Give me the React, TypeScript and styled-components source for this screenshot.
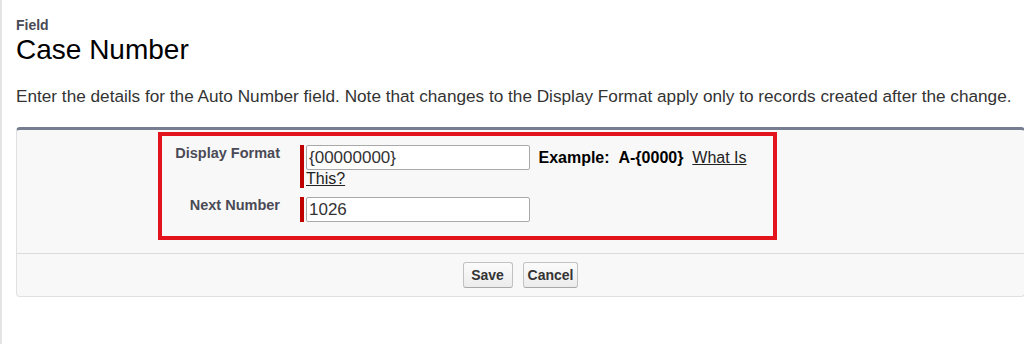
import React from "react";
import styled, { createGlobalStyle } from "styled-components";

const GlobalStyle = createGlobalStyle`
  html, body {
    margin: 0;
    padding: 0;
    background: #ffffff;
    overflow: hidden;
  }
  body {
    font-family: "Liberation Sans", Arial, sans-serif;
    color: #333333;
  }
`;

const Page = styled.div`
  min-height: 344px;
  box-sizing: border-box;
  border-left: 2px solid #e4e4e4;
  padding: 17px 0 0 14px;
`;

const Kicker = styled.div`
  font-size: 14px;
  font-weight: bold;
  line-height: 17px;
  color: #4a4a56;
`;

const Title = styled.h1`
  margin: 0;
  font-size: 28px;
  font-weight: normal;
  line-height: 32px;
  color: #000000;
`;

const Intro = styled.p`
  margin: 21px 0 0;
  font-size: 17.2px;
  line-height: 19px;
  color: #333333;
  white-space: nowrap;
`;

const Panel = styled.section`
  margin-top: 21px;
  margin-right: -1px;
  background: #f8f8f8;
  border: 1px solid #e0e0e0;
  border-top: 3px solid #767d90;
  border-radius: 4px;
`;

const FormSection = styled.div`
  padding: 2px 0 13px 141px;
  border-bottom: 1px solid #dcdcdc;
`;

const Highlight = styled.div`
  box-sizing: border-box;
  width: 619px;
  border: 4px solid #e3141b;
  padding: 9px 0 14px 0;
  display: grid;
  grid-template-columns: 122px 1fr;
  column-gap: 16px;
  row-gap: 9px;
`;

const Label = styled.label`
  padding-right: 4px;
  text-align: right;
  font-size: 14.5px;
  font-weight: bold;
  line-height: 17px;
  color: #4a4a56;
`;

const DataCell = styled.div`
  border-left: 4px solid #c00000;
  padding-left: 2px;
  font-size: 16px;
  line-height: 18px;
  color: #000000;
`;

const TextInput = styled.input`
  box-sizing: border-box;
  width: 224px;
  height: 25px;
  margin: 0 4px 0 0;
  padding: 0 2px;
  border: 1px solid #a9a9a9;
  border-radius: 2px;
  background: #ffffff;
  font-family: inherit;
  font-size: 17px;
  color: #333333;
  vertical-align: baseline;
  outline: none;
`;

const Example = styled.span`
  font-weight: bold;
  color: #000000;
`;

const HelpLink = styled.a`
  color: #222222;
  text-decoration: underline;
  cursor: pointer;
`;

const ButtonBar = styled.div`
  display: flex;
  justify-content: center;
  gap: 10px;
  padding: 8px 0;
`;

const Button = styled.button`
  box-sizing: border-box;
  height: 26px;
  min-width: 50px;
  padding: 0 4px;
  border: 1px solid #c2c2c2;
  border-bottom-color: #a8a8a8;
  border-radius: 3px;
  background: linear-gradient(#fbfbfb, #ececec);
  font-family: inherit;
  font-size: 14px;
  font-weight: bold;
  color: #333333;
  cursor: pointer;
`;

const exampleText = "Example:\u00a0\u00a0A-{0000}";

export default function App() {
  return (
    <>
      <GlobalStyle />
      <Page>
        <Kicker>Field</Kicker>
        <Title>Case Number</Title>
        <Intro>
          Enter the details for the Auto Number field. Note that changes to the Display Format apply only to
          records created after the change.
        </Intro>
        <Panel>
          <FormSection>
            <Highlight>
              <Label>Display Format</Label>
              <DataCell>
                <TextInput defaultValue="{00000000}" />{" "}
                <Example>{exampleText}</Example>
                {"\u00a0\u00a0"}
                <HelpLink>What Is This?</HelpLink>
              </DataCell>
              <Label>Next Number</Label>
              <DataCell>
                <TextInput defaultValue="1026" />
              </DataCell>
            </Highlight>
          </FormSection>
          <ButtonBar>
            <Button>Save</Button>
            <Button>Cancel</Button>
          </ButtonBar>
        </Panel>
      </Page>
    </>
  );
}
